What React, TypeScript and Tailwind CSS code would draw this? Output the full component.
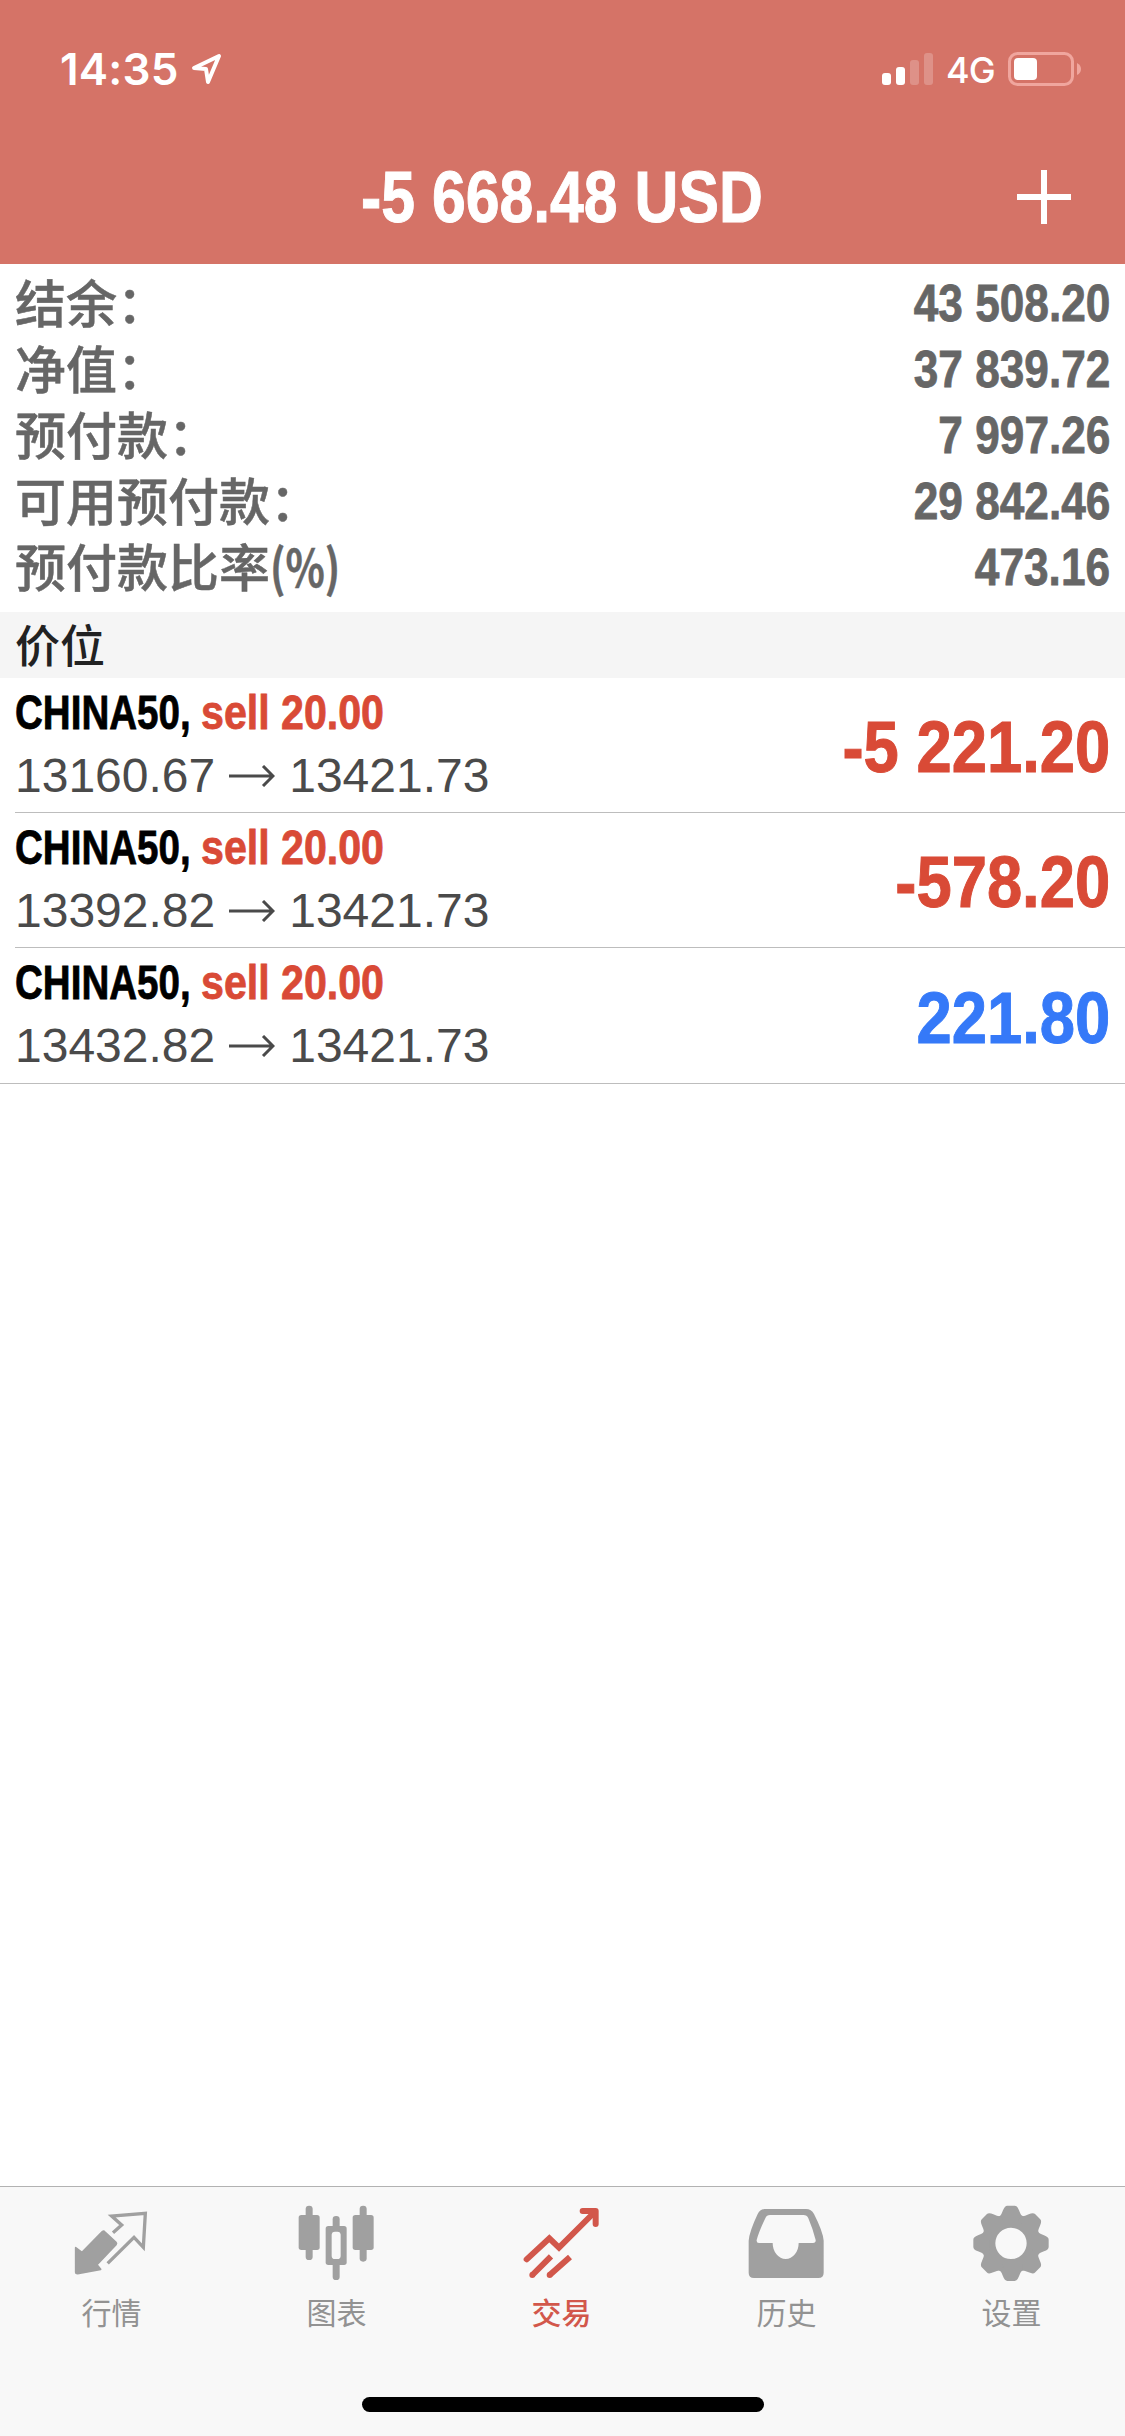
import type { ReactNode } from "react";
import clsx from "clsx";

const summary = [
  { label: "结余：", value: "43 508.20" },
  { label: "净值：", value: "37 839.72" },
  { label: "预付款：", value: "7 997.26" },
  { label: "可用预付款：", value: "29 842.46" },
  { label: "预付款比率", unit: "(%)", value: "473.16" },
];

const positions = [
  { id: 1, symbol: "CHINA50", side: "sell 20.00", open: "13160.67", current: "13421.73", profit: "-5 221.20" },
  { id: 2, symbol: "CHINA50", side: "sell 20.00", open: "13392.82", current: "13421.73", profit: "-578.20" },
  { id: 3, symbol: "CHINA50", side: "sell 20.00", open: "13432.82", current: "13421.73", profit: "221.80" },
];

function QuotesIcon() {
  return (
    <>
      <path d="M138 98 L164 75 L134 48 L235 40 L229 142 L201 112 L122 190" fill="none" stroke="currentColor" strokeWidth="10" />
      <path
        d="M26 143 L45 157 L106 95 Q110 92 114 96 L147 127 Q150 130 147 134 L90 194 L101 208 L32 221 Q26 221 26 216 Z"
        fill="currentColor"
        stroke="currentColor"
        strokeWidth="5"
        strokeLinejoin="round"
      />
    </>
  );
}

function ChartIcon() {
  return (
    <g fill="currentColor">
      <rect x="41" y="17" width="21" height="163" rx="10" />
      <rect x="20" y="45" width="63" height="105" rx="8" />
      <rect x="122" y="48" width="21" height="192" rx="10" />
      <rect x="101" y="78" width="63" height="117" rx="8" />
      <rect x="119" y="95" width="27" height="82" rx="10" fill="#f8f8f8" />
      <rect x="203" y="17" width="21" height="168" rx="10" />
      <rect x="182" y="45" width="63" height="105" rx="8" />
    </g>
  );
}

function TradeIcon() {
  return (
    <g fill="none" stroke="currentColor" strokeWidth="18">
      <path d="M29 178 L97 115 L126 143 L233 36" strokeLinecap="round" />
      <path d="M197 33 H236 V72" strokeLinecap="round" strokeLinejoin="round" />
      <path d="M102 169 L46 225 M159 171 L98 225" />
      <g fill="currentColor" stroke="none">
        <circle cx="46" cy="225" r="9" />
        <circle cx="98" cy="225" r="9" />
      </g>
    </g>
  );
}

function HistoryIcon() {
  return (
    <path
      fill="currentColor"
      fillRule="evenodd"
      d="M68 27 H192 Q208 27 216 42 Q243 95 245 122 V218 Q245 234 229 234 H36 Q20 234 20 218 V122 Q22 95 47 42 Q54 27 68 27 Z
         M84 45 Q74 45 70 55 Q52 92 44 120 Q43 129 51 129 H92 A39 48 0 0 0 170 129 H213 Q222 129 221 120 Q213 88 199 55 Q195 45 184 45 Z"
    />
  );
}

function SettingsIcon() {
  return (
    <g>
      <circle cx="132" cy="130" r="68" fill="none" stroke="currentColor" strokeWidth="42" />
      {[0, 45, 90, 135, 180, 225, 270, 315].map((angle) => (
        <path
          key={angle}
          transform={`rotate(${angle} 132 130)`}
          fill="currentColor"
          d="M98 50 Q104 43 108 31 Q113 17 121 17 H143 Q151 17 156 31 Q160 43 166 50 V66 H98 Z"
        />
      ))}
    </g>
  );
}

const tabs: { label: string; icon: ReactNode; active?: boolean }[] = [
  { label: "行情", icon: <QuotesIcon /> },
  { label: "图表", icon: <ChartIcon /> },
  { label: "交易", icon: <TradeIcon />, active: true },
  { label: "历史", icon: <HistoryIcon /> },
  { label: "设置", icon: <SettingsIcon /> },
];

function StatusBar() {
  return (
    <div className="flex h-[138px] items-center justify-between pl-[60px] pr-[43px] text-white">
      <div className="flex items-center gap-[11px]">
        <span className="w-[120px] font-['Inter',sans-serif] text-[44px] leading-none font-semibold tracking-[0.2px]">14:35</span>
        <svg width="31" height="32" viewBox="0 0 31 32" fill="none" stroke="white" strokeWidth="4" strokeLinejoin="round">
          <path d="M28 3 L17 29 L15 16 L3 15 Z" />
        </svg>
      </div>
      <div className="flex items-center">
        <svg width="51" height="34" viewBox="0 0 51 34" fill="white">
          <rect x="0" y="21" width="9" height="12" rx="3" />
          <rect x="14" y="15" width="9" height="18" rx="3" />
          <rect x="28" y="8" width="9" height="25" rx="3" opacity="0.22" />
          <rect x="42" y="1" width="9" height="32" rx="3" opacity="0.22" />
        </svg>
        <span className="ml-[13px] w-[49px] pt-[2px] font-['Inter',sans-serif] text-[36px] leading-none font-medium tracking-[-0.8px]">
          4G
        </span>
        <svg className="ml-[13px]" width="74" height="34" viewBox="0 0 74 34">
          <rect x="1.5" y="1.5" width="63" height="31" rx="8" fill="none" stroke="#f0a69e" strokeWidth="3" />
          <rect x="6" y="6" width="23" height="22" rx="4" fill="white" />
          <path d="M69 11 Q73 13 73 17 Q73 21 69 23 Z" fill="#f0a69e" />
        </svg>
      </div>
    </div>
  );
}

export default function App() {
  return (
    <div className="flex h-[2436px] w-[1125px] flex-col overflow-hidden bg-white font-['Liberation_Sans','Noto_Sans_CJK_SC',sans-serif]">
      <header className="h-[264px] bg-[#d57367]">
        <StatusBar />
        <div className="grid h-[118px] grid-cols-[1fr_auto_1fr] items-center text-white">
          <span />
          <h1 className="w-[403px] text-[73px] leading-[118px] font-bold whitespace-nowrap">
            <span className="inline-block origin-left scale-x-[0.832] [-webkit-text-stroke:1px_currentColor]">-5 668.48 USD</span>
          </h1>
          <button className="mr-[54px] justify-self-end" aria-label="New order">
            <svg width="54" height="54" viewBox="0 0 54 54" stroke="white" strokeWidth="6">
              <path d="M27 0 V54 M0 27 H54" />
            </svg>
          </button>
        </div>
      </header>

      {/* Account summary */}
      <section className="h-[348px] px-[15px] pt-[3px] text-[#666666]">
        {summary.map((row) => (
          <div key={row.label} className="flex h-[66px] items-center justify-between whitespace-nowrap">
            <span className="pt-px font-['Noto_Sans_CJK_SC',sans-serif] text-[51px] leading-[66px] font-medium [-webkit-text-stroke:0.5px_currentColor]">
              {row.label}
              {row.unit && <span className="inline-block origin-left scale-x-[0.8] font-bold">{row.unit}</span>}
            </span>
            <span className="origin-right scale-x-[0.85] pt-[5px] text-[52px] leading-[66px] font-bold [-webkit-text-stroke:0.8px_currentColor]">
              {row.value}
            </span>
          </div>
        ))}
      </section>

      <h2 className="h-[66px] bg-[#f5f5f5] px-[15px] font-['Noto_Sans_CJK_SC',sans-serif] text-[45px] leading-[64px] font-medium text-[#222222]">
        价位
      </h2>

      {/* Open positions */}
      <ul>
        {positions.map((pos, i) => (
          <li key={pos.id} className={clsx(i === positions.length - 1 ? "border-b border-[#bdbdbd]" : "pl-[15px]")}>
            <div
              className={clsx(
                "flex h-[135px] items-center justify-between pr-[15px] whitespace-nowrap",
                i === positions.length - 1 ? "pl-[15px]" : "border-b border-[#bdbdbd]",
              )}
            >
              <div className="flex flex-col pb-px">
                <div className="flex h-[62px] items-center text-[48px] leading-[62px] font-bold [-webkit-text-stroke:0.8px_currentColor]">
                  <span className="w-[186px] origin-left scale-x-[0.803] text-black">{pos.symbol},</span>
                  <span className="origin-left scale-x-[0.857] text-[#d94a36]">{pos.side}</span>
                </div>
                <div className="flex h-[64px] items-center text-[48px] leading-[64px] text-[#4a4a4a]">
                  <span>{pos.open}</span>
                  <svg className="mx-[14px]" width="46" height="22" viewBox="0 0 46 22" fill="none" stroke="currentColor" strokeWidth="3">
                    <path d="M0 11 H44 M34 1 L44 11 L34 21" />
                  </svg>
                  <span>{pos.current}</span>
                </div>
              </div>
              <span
                className={clsx(
                  "origin-right scale-x-[0.88] pt-[4px] text-[72px] leading-[130px] font-bold [-webkit-text-stroke:1px_currentColor]",
                  pos.profit.startsWith("-") ? "text-[#d94a36]" : "text-[#3579f8]",
                )}
              >
                {pos.profit}
              </span>
            </div>
          </li>
        ))}
      </ul>

      <nav className="mt-auto flex h-[250px] flex-col items-center border-t border-[#b2b2b2] bg-[#f8f8f8]">
        <div className="grid w-full -translate-x-px grid-cols-5 pt-[13px]">
          {tabs.map((tab) => (
            <button
              key={tab.label}
              className={clsx("flex flex-col items-center", tab.active ? "text-[#d2574b]" : "text-[#a0a0a0]")}
            >
              <svg width="90" height="84" viewBox="0 0 270 252">
                {tab.icon}
              </svg>
              <span
                className={clsx(
                  "mt-[5px] font-['Noto_Sans_CJK_SC',sans-serif] text-[30px] leading-[44px]",
                  tab.active ? "font-medium" : "text-[#929292]",
                )}
              >
                {tab.label}
              </span>
            </button>
          ))}
        </div>
        <div className="mt-auto mb-[24px] h-[15px] w-[402px] rounded-full bg-black" />
      </nav>
    </div>
  );
}
